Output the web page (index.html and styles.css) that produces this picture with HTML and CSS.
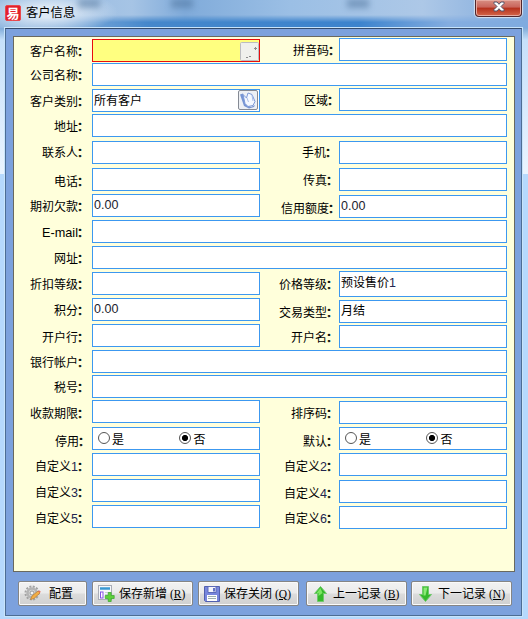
FILE: index.html
```html
<!DOCTYPE html>
<html lang="zh-CN">
<head>
<meta charset="utf-8">
<title>客户信息</title>
<link rel="stylesheet" href="styles.css">
</head>
<body>
<div class="window">
  <header class="titlebar">
    <span class="logo">易</span>
    <h1>客户信息</h1>
    <span class="ghost g1"></span><span class="ghost g2"></span><span class="ghost g3"></span>
    <button class="close" aria-label="关闭"><svg width="12" height="11" viewBox="0 0 12 11"><path d="M1 1h3l2 2.300L8 1h3v1.500L8 5.500l3 3V10H8L6 7.700 4 10H1V8.500l3-3-3-3z" fill="#fff" stroke="#54556a"/></svg></button>
  </header>
  <main class="client">
    <form class="panel">
      <label class="lead n1">客户名称<i>：</i></label><div class="field required"><svg class="pick pale" width="19" height="19" viewBox="0 0 19 19"><rect x=".5" y=".5" width="18" height="18" rx="1" fill="#f0f0ec" stroke="#bcbcc0"/><path d="M14 6.500h3M15.500 5v3M6 15.500h2M9 14.500h2" stroke="#8c8c8c"/></svg></div>
      <label class="r2">拼音码<i>：</i></label><div class="field up"></div>

      <label class="lead n1">公司名称<i>：</i></label><div class="field full"></div>

      <label class="lead n1">客户类别<i>：</i></label><div class="field low">所有客户<svg class="pick" width="20" height="20" viewBox="0 0 20 20"><rect x=".5" y=".5" width="19" height="19" rx="1.500" fill="#edf0f5" stroke="#858a94"/><path d="M2 4.500 5 3.500 9 15l4 2 4-2-1 2-5 1.500-5-2.500z" fill="#7795d3"/><path d="M5 4.500 8.500 8 10 3l4 1.500 3 7-2 4-5 1-3-3z" fill="#f4f8ff" stroke="#7d9ad8"/><path d="M9 8l1.500 4M14 5l1 6" stroke="#a9bde6" fill="none"/></svg></div>
      <label class="r1">区域<i>：</i></label><div class="field up"></div>

      <label class="lead n1">地址<i>：</i></label><div class="field full"></div>

      <label class="lead">联系人<i>：</i></label><div class="field"></div>
      <label class="rm">手机<i>：</i></label><div class="field"></div>

      <label class="lead n2">电话<i>：</i></label><div class="field"></div>
      <label class="n1">传真<i>：</i></label><div class="field"></div>

      <label class="lead n1">期初欠款<i>：</i></label><div class="field num">0.00</div>
      <label class="n3 r2">信用额度<i>：</i></label><div class="field num down">0.00</div>

      <label class="lead n1 latin">E-mail<i>：</i></label><div class="field full"></div>

      <label class="lead n1">网址<i>：</i></label><div class="field full"></div>

      <label class="lead n1">折扣等级<i>：</i></label><div class="field"></div>
      <label class="n1">价格等级<i>：</i></label><div class="field tall">预设售价<b>1</b></div>

      <label class="lead n1">积分<i>：</i></label><div class="field num">0.00</div>
      <label class="n3">交易类型<i>：</i></label><div class="field down2">月结</div>

      <label class="lead n2">开户行<i>：</i></label><div class="field"></div>
      <label class="n2">开户名<i>：</i></label><div class="field down"></div>

      <label class="lead n1">银行帐户<i>：</i></label><div class="field full"></div>

      <label class="lead n1">税号<i>：</i></label><div class="field full"></div>

      <label class="lead n2">收款期限<i>：</i></label><div class="field"></div>
      <label class="n2">排序码<i>：</i></label><div class="field down"></div>

      <label class="lead n3 r1">停用<i>：</i></label><div class="field radios"><span><u></u>是</span><span><u class="on"></u>否</span></div>
      <label class="n3">默认<i>：</i></label><div class="field radios"><span><u></u>是</span><span><u class="on"></u>否</span></div>

      <label class="lead n2">自定义<b>1</b><i>：</i></label><div class="field"></div>
      <label class="n2">自定义<b>2</b><i>：</i></label><div class="field"></div>

      <label class="lead n2">自定义<b>3</b><i>：</i></label><div class="field"></div>
      <label class="n3">自定义<b>4</b><i>：</i></label><div class="field down"></div>

      <label class="lead n2">自定义<b>5</b><i>：</i></label><div class="field"></div>
      <label class="n2">自定义<b>6</b><i>：</i></label><div class="field down"></div>
    </form>
    <footer class="actions">
      <button class="btn config"><svg width="18" height="18" viewBox="0 0 18 18"><circle cx="8" cy="8" r="6.500" fill="none" stroke="#a2a2a2" stroke-width="2" stroke-dasharray="2 1.400"/><circle cx="8" cy="8" r="4.500" fill="#d5d5d5" stroke="#b4b4b4" stroke-width="2.500"/><circle cx="8" cy="8" r="2" fill="#f4f4f4" stroke="#999"/><path d="M6.500 14.500 8 11l6-5 2 2-6 5.500z" fill="#f3ae45" stroke="#b77b35" stroke-width=".7"/><path d="M14 6l2 2 .7-1.500-1.400-1z" fill="#e8705f"/></svg><span>配置</span></button>
      <button class="btn add"><svg width="17" height="17" viewBox="0 0 17 17"><rect x=".5" y=".5" width="13" height="14" fill="#f6f8fb" stroke="#a9adb7"/><path d="M2 3.500h10" stroke="#3898d3" stroke-width="2.500"/><rect x="2.500" y="7" width="2.500" height="6" fill="#fff" stroke="#8652e5"/><path d="M7 7.500h5M7 9.500h3" stroke="#ccd"/><path d="M10.200 7.500h3v3h3v3h-3v3h-3v-3h-3v-3h3z" fill="#5ed03c" stroke="#37a329" stroke-width=".7"/></svg><span>保存新增<em>(<ins>R</ins>)</em></span></button>
      <button class="btn save"><svg width="16" height="16" viewBox="0 0 16 16"><path d="M.5.5h15v15h-14l-1-1z" fill="#7786dd" stroke="#5260ae"/><path d="M4 .500h8v6H4z" fill="#f4f5fc" stroke="#5d6bb9"/><path d="M9 2h2v3.500H9z" fill="#6372c5"/><path d="M3 9h10v6H3z" fill="#fff"/><path d="M4 10.500h8M4 12.500h8" stroke="#9eafb0"/></svg><span>保存关闭<em>(<ins>Q</ins>)</em></span></button>
      <button class="btn prev"><svg width="13" height="16" viewBox="0 0 13 16"><path d="M6.500.5l6 7H9.500v8h-6v-8h-3z" fill="#35b92b" stroke="#70c86c"/><path d="M6.500 2l-4 5h2v3l4-3z" fill="#7be562"/></svg><span>上一记录<em>(<ins>B</ins>)</em></span></button>
      <button class="btn next"><svg width="13" height="16" viewBox="0 0 13 16"><path d="M6.500 15.500l6-7H9.500v-8h-6v8h-3z" fill="#35b92b" stroke="#70c86c"/><path d="M4.500 1.500h4l-2 8H3.500h1z" fill="#8ae975"/></svg><span>下一记录<em>(<ins>N</ins>)</em></span></button>
    </footer>
  </main>
</div>
</body>
</html>
```
FILE: styles.css
```css
* { box-sizing: border-box; }
body {
  margin: 0;
  font: 12px/14px "Liberation Sans", "Noto Sans CJK SC", sans-serif;
  color: #000;
}
.window {
  position: relative;
  z-index: 0;
  width: 528px;
  height: 619px;
  overflow: hidden;
  padding: 0 6px 3px 4px;
  background:
    linear-gradient(90deg, #8fb6df, #a6c4e5 25%, #80abda 35%, #9bbfe5 55%, #adc8e7 80%, #7fa9dc) 0 0 / 100% 28px no-repeat,
    linear-gradient(#80acd9, #c6e0fa) 0 28px / 100% 12px no-repeat,
    linear-gradient(#c6e0fa, #eaf4ff) 0 40px / 100% 134px no-repeat,
    #b6d9fd;
}
.titlebar {
  position: relative;
  display: flex;
  align-items: flex-start;
  gap: 6px;
  height: 28px;
  margin: 0 -6px 0 -4px;
  padding: 5px 5px 0;
  background: radial-gradient(ellipse 70px 22px at 48px 12px, #dce8f5 25%, transparent);
}
.titlebar::before {
  content: "";
  position: absolute;
  z-index: -1;
  inset: 15px 0 0;
  background: linear-gradient(90deg, transparent 5%, #4587cb 28%, #3c83cd 68%, #84ade0 85%, #7fabdf);
  mask-image: linear-gradient(transparent, #000 55%);
}
.logo {
  flex: none;
  width: 16px;
  height: 16px;
  border: 1px solid #e8474c;
  border-radius: 2px;
  background: #e3202b;
  color: #fff;
  font: 700 13px/13px "Noto Sans CJK SC", sans-serif;
  text-align: center;
}
h1 { margin: 1px 0 0 -1px; font-size: 12.300px; font-weight: 400; line-height: 15px; }
.ghost { position: absolute; top: -1px; width: 22px; height: 9px; background: #4a6f98; opacity: .5; filter: blur(3px); }
.g1 { left: 78px; }
.g2 { left: 171px; }
.g3 { left: 347px; }
.close {
  display: flex;
  align-items: center;
  justify-content: center;
  width: 47px;
  height: 17px;
  margin: -5px 1px 0 auto;
  padding: 0 0 3px 1px;
  border: 1px solid #52262c;
  border-top: 0;
  border-radius: 0 0 4px 4px;
  box-shadow: inset 0 0 0 1px #e6aaa0, 0 0 1px 1px #d5e2f0;
  background: linear-gradient(#d88f83, #c9645a 45%, #b5301c 50%, #d4674a);
}
.close svg { flex: none; }
.client {
  height: 588px;
  margin-left: 1px;
  padding: 7px 6px 0 8px;
  border: 1px solid #4d6d94;
  border-top-color: #344b6c;
  outline: 1px solid #c8e4fb;
  background: #7ca1dd;
}
.panel {
  display: grid;
  grid-template-columns: 78px 168px 79px 168px;
  grid-template-rows: 24px 26px 25px 27px 27px 26px 26px 26px 26px 26px 26px 26px 25px 25px 27px 26px 26px 26px 24px;
  align-items: start;
  width: 502px;
  height: 536px;
  margin: 0 0 0 -1px;
  padding: 2px 0 0;
  border: 1px solid #69695f;
  background: #ffffdb;
}
label {
  padding-top: 5px;
  text-align: right;
  white-space: nowrap;
}
.lead { padding-right: 2px; }
.n1 { padding-top: 6px; }
.n2 { padding-top: 7px; }
.n3 { padding-top: 8px; }
.r1 { margin-right: -1px; }
.r2 { margin-right: -2px; }
.rm { margin-right: 1px; }
.latin { font-size: 12.700px; }
label i { margin: 0 1px 0 -1px; font-size: 12px; font-style: normal; -webkit-text-stroke: .6px #000; }
b { font-weight: 400; font-size: 12.500px; color: #232650; }
.field {
  position: relative;
  height: 23px;
  padding: 3px 1px 0;
  border: 1px solid #3c98f0;
  background: #fff;
}
.full { grid-column: span 3; }
.up { margin-top: -1px; }
.down { margin-top: 1px; }
.down2 { margin-top: 2px; }
.tall { height: 26px; margin-top: -1px; padding-top: 4px; }
.low { padding-top: 4px; }
.num { color: #22222e; font-size: 12.500px; }
.required { border-color: #e80d0d; background: #ffff80; }
.pick { position: absolute; top: 0; right: 1px; }
.pale { top: 2px; right: 0; }
.radios { display: flex; padding: 4px 0 0 5px; }
.radios span { display: flex; width: 82px; line-height: 17px; gap: 2px; }
.radios span + span { gap: 3px; }
u { width: 12px; height: 12px; border: 1px solid #555; border-radius: 50%; }
u.on { background: radial-gradient(circle, #000 2.700px, #fff 3.500px); }
.actions { display: flex; padding: 9px 0 0 4px; }
.btn {
  display: flex;
  flex: none;
  align-items: center;
  width: 101px;
  height: 25px;
  margin-right: 5px;
  padding: 0 0 0 5px;
  border: 1px solid #858585;
  border-radius: 2px;
  box-shadow: inset 0 0 0 1px #fafafa;
  background: linear-gradient(#f2f2f2, #ebebeb 48%, #dcdcdc 52%, #d0d0d0);
  font: inherit;
  color: #000;
  white-space: nowrap;
}
.btn svg { flex: none; }
.btn span { margin-left: 4px; }
.btn.config { width: 69px; }
.btn.config span { margin-left: 7px; }
.save { margin-right: 7px; }
.prev { margin-right: 4px; padding-left: 7px; }
.next { padding-left: 7px; }
.btn.prev span, .btn.next span { margin-left: 6px; }
em { margin-left: 3px; font: 11.500px "Liberation Serif", serif; }
ins { text-decoration: underline; }
```
